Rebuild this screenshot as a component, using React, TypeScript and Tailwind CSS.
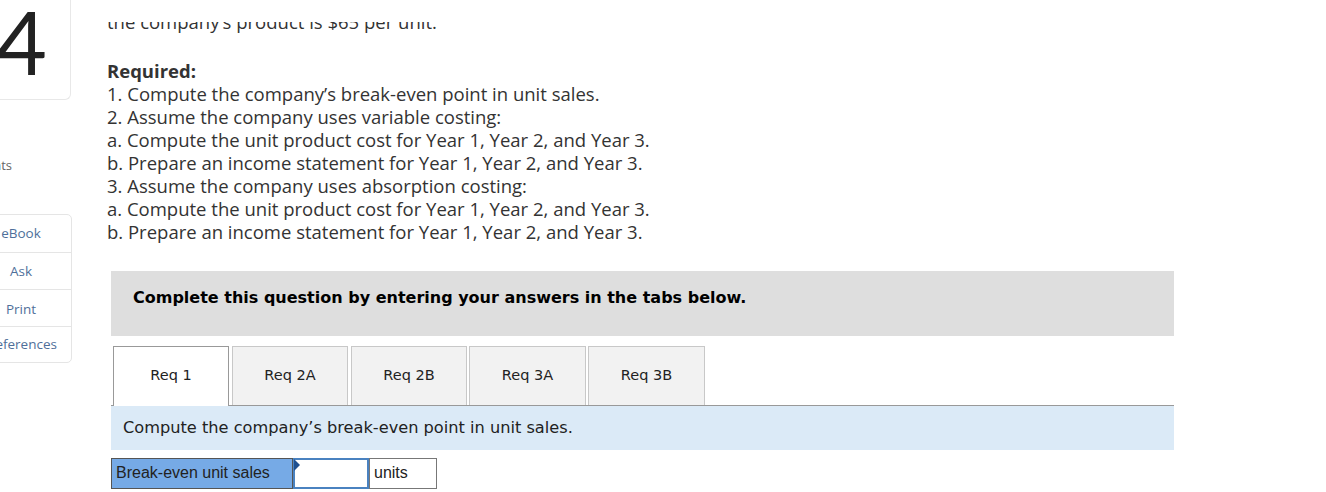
import React from "react";

const body = { fontFamily: "'Open Sans', Lato, sans-serif" };
const verd = { fontFamily: "'DejaVu Sans', Verdana, sans-serif" };

export default function App() {
  const lines = [
    "1. Compute the company\u2019s break-even point in unit sales.",
    "2. Assume the company uses variable costing:",
    "a. Compute the unit product cost for Year 1, Year 2, and Year 3.",
    "b. Prepare an income statement for Year 1, Year 2, and Year 3.",
    "3. Assume the company uses absorption costing:",
    "a. Compute the unit product cost for Year 1, Year 2, and Year 3.",
    "b. Prepare an income statement for Year 1, Year 2, and Year 3.",
  ];
  const tabs = ["Req 1", "Req 2A", "Req 2B", "Req 3A", "Req 3B"];
  return (
    <div className="w-[1326px] h-[492px] bg-white overflow-hidden flex" style={body}>
      {/* sidebar */}
      <div className="w-[107px] shrink-0 flex flex-col">
        <div className="w-[101px] ml-[-30px] h-[100px] border border-[#e8e8e8] rounded-br-[6px] border-t-0 flex items-start">
          <span className="ml-[25px] mt-[-4px] text-[88px] leading-[90px] text-[#222] font-normal" style={{ fontFamily: "Lato, sans-serif" }}>4</span>
        </div>
        <div className="h-[24px] mt-[54px] w-[12px] flex justify-end items-center whitespace-nowrap">
          <span className="text-[13px] text-[#666]">Points</span>
        </div>
        <div className="w-[102px] ml-[-30px] mt-[36px] h-[149px] border border-[#e5e5e5] rounded-[5px] flex flex-col text-[13.5px] text-[#4f6f9a]">
          <div className="h-[38px] flex items-center justify-center border-b border-[#e5e5e5]">eBook</div>
          <div className="h-[37px] flex items-center justify-center border-b border-[#e5e5e5]">Ask</div>
          <div className="h-[37px] flex items-center justify-center border-b border-[#e5e5e5] pt-[3px]">Print</div>
          <div className="flex-1 flex items-center justify-center pl-[2px]">References</div>
        </div>
      </div>

      {/* main */}
      <div className="flex-1 flex flex-col">
        <div className="mt-[22px] h-[13px] overflow-hidden">
          <div className="mt-[-12px] text-[18.5px] leading-[23px] text-[#333]">
            the company&rsquo;s product is $65 per unit.
          </div>
        </div>
        <div className="mt-[23.5px] text-[18.5px] leading-[23px] text-[#333]">
          <div className="font-bold">Required:</div>
          {lines.map((l, i) => (
            <div key={i}>{l}</div>
          ))}
        </div>

        <div className="ml-[4px] w-[1063px] mt-[28px] h-[65px] bg-[#dedede] flex items-start pt-[17px] pl-[22px]" style={verd}>
          <span className="font-bold text-[16px] leading-[19px] text-black">
            Complete this question by entering your answers in the tabs below.
          </span>
        </div>

        <div className="ml-[4px] w-[1063px] mt-[10px] flex items-end border-b border-[#999] h-[60px]" style={verd}>
          {tabs.map((t, i) => (
            <div
              key={t}
              className={
                i === 0
                  ? "ml-[2px] mb-[-1px] w-[116px] h-[60px] bg-white border border-b-0 border-[#999] flex items-center justify-center text-[14.5px] text-[#222]"
                  : i >= 3
                  ? "ml-[2px] w-[117px] h-[59px] bg-[#f2f2f2] border border-b-0 border-[#c8c8c8] flex items-center justify-center text-[14.5px] text-[#222]"
                  : "ml-[3px] w-[116px] h-[59px] bg-[#f2f2f2] border border-b-0 border-[#c8c8c8] flex items-center justify-center text-[14.5px] text-[#222]"
              }
            >
              {t}
            </div>
          ))}
        </div>

        <div className="ml-[4px] w-[1063px] h-[44px] bg-[#dbeaf7] flex items-center pl-[12px] pt-[2px]" style={verd}>
          <span className="text-[16.2px] text-[#222]">Compute the company&rsquo;s break-even point in unit sales.</span>
        </div>

        <div className="ml-[4px] mt-[8px] flex h-[31px]" style={{ fontFamily: "'Liberation Sans', Arial, sans-serif" }}>
          <div className="w-[182px] bg-[#76aae6] border border-[#555] flex items-center pl-[4px] text-[16px] text-[#222]">
            Break-even unit sales
          </div>
          <div className="relative w-[76px] bg-white border-2 border-[#4a82c0]">
            <div className="absolute left-[-1px] top-[-1px] w-0 h-0 border-t-[6px] border-t-transparent border-b-[6px] border-b-transparent border-l-[6px] border-l-[#1f4f8f]" />
          </div>
          <div className="w-[68px] bg-white border border-[#777] flex items-center pl-[4px] text-[16px] text-[#222]">
            units
          </div>
        </div>
      </div>
    </div>
  );
}
